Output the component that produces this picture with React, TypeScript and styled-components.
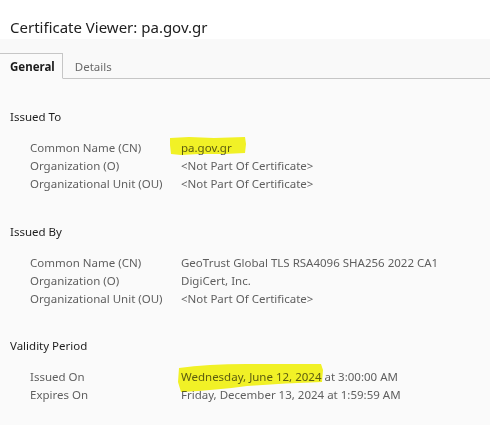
import styled, { createGlobalStyle } from "styled-components"

const GlobalStyle = createGlobalStyle`
  html, body {
    margin: 0;
    padding: 0;
    background: #fafafa;
  }
  body {
    font-family: "Noto Sans", "Open Sans", sans-serif;
    width: 490px;
    height: 425px;
    overflow: hidden;
  }
`

const Viewer = styled.div`
  display: flex;
  flex-direction: column;
  width: 490px;
  height: 425px;
  background: #fafafa;
`

const Header = styled.header`
  display: flex;
  align-items: center;
  height: 39px;
  padding: 0 10px;
  background: #ffffff;
`

const Title = styled.h1`
  margin: 0;
  padding-top: 15px;
  font-size: 15px;
  font-weight: 400;
  color: #202020;
`

const TabBar = styled.nav`
  display: flex;
  align-items: flex-end;
  height: 39px;
  background: #f9f9f9;
  border-bottom: 1px solid #c6c6c6;
`

const Tab = styled.div<{ $active?: boolean }>`
  display: flex;
  align-items: center;
  height: 24px;
  margin-bottom: -1px;
  padding: ${p => (p.$active ? "0 7px 0 10px" : "0 10px 0 12px")};
  font-size: 11.5px;
  font-weight: ${p => (p.$active ? 700 : 400)};
  color: ${p => (p.$active ? "#1b1b1b" : "#6a6a6a")};
  background: ${p => (p.$active ? "#fafafa" : "transparent")};
  border: 1px solid ${p => (p.$active ? "#c6c6c6" : "transparent")};
  border-left: none;
  border-bottom-color: ${p => (p.$active ? "#fafafa" : "transparent")};
`

const Body = styled.main`
  display: flex;
  flex-direction: column;
  padding: 29px 10px 0;
`

const Section = styled.section<{ $space?: number }>`
  display: flex;
  flex-direction: column;
  gap: 13px;
  margin-top: ${p => p.$space ?? 0}px;
`

const Heading = styled.h2`
  margin: 0;
  font-size: 11.5px;
  line-height: 18px;
  font-weight: 400;
  color: #1e1e1e;
`

const Fields = styled.dl`
  display: grid;
  grid-template-columns: 151px 1fr;
  margin: 0;
  padding-left: 20px;
  font-size: 11.5px;
  line-height: 18px;
  color: #5f5f5f;
`

const Label = styled.dt`
  margin: 0;
`

const Value = styled.dd`
  margin: 0;
  white-space: nowrap;
`

const Marked = styled.span`
  position: relative;
`

const Marker = styled.svg`
  position: absolute;
  pointer-events: none;
  mix-blend-mode: multiply;
`

type Field = { label: string; value: string; mark?: "name" | "date"; rest?: string }

const issuedTo: Field[] = [
  { label: "Common Name (CN)", value: "pa.gov.gr", mark: "name" },
  { label: "Organization (O)", value: "<Not Part Of Certificate>" },
  { label: "Organizational Unit (OU)", value: "<Not Part Of Certificate>" },
]

const issuedBy: Field[] = [
  { label: "Common Name (CN)", value: "GeoTrust Global TLS RSA4096 SHA256 2022 CA1" },
  { label: "Organization (O)", value: "DigiCert, Inc." },
  { label: "Organizational Unit (OU)", value: "<Not Part Of Certificate>" },
]

const validity: Field[] = [
  { label: "Issued On", value: "Wednesday, June 12, 2024", mark: "date", rest: " at 3:00:00 AM" },
  { label: "Expires On", value: "Friday, December 13, 2024 at 1:59:59 AM" },
]

function Highlight({ kind }: { kind: "name" | "date" }) {
  if (kind === "name") {
    return (
      <Marker width="78" height="22" viewBox="0 0 78 22" style={{ left: -12, top: -5 }}>
        <path d="M1 3 L20 2 L45 3 L76 2 L77 9 L76 18 L55 19 L30 19 L12 20 L2 19 L1 10 Z" fill="#f6f626" />
      </Marker>
    )
  }
  return (
    <Marker width="150" height="32" viewBox="0 0 150 32" style={{ left: -4, top: -7 }}>
      <path d="M2 6 Q30 2 70 2 L144 2 L146 8 L145 20 Q110 21 70 24 Q40 28 4 30 L1 20 Z" fill="#f6f626" />
    </Marker>
  )
}

function FieldList({ fields }: { fields: Field[] }) {
  return (
    <Fields>
      {fields.map(f => (
        <div key={f.label} style={{ display: "contents" }}>
          <Label>{f.label}</Label>
          <Value>
            {f.mark ? (
              <Marked>
                <Highlight kind={f.mark} />
                {f.value}
              </Marked>
            ) : (
              f.value
            )}
            {f.rest}
          </Value>
        </div>
      ))}
    </Fields>
  )
}

export default function App() {
  return (
    <>
      <GlobalStyle />
      <Viewer>
        <Header>
          <Title>Certificate Viewer: pa.gov.gr</Title>
        </Header>
        <TabBar>
          <Tab $active>General</Tab>
          <Tab>Details</Tab>
        </TabBar>
        <Body>
          <Section>
            <Heading>Issued To</Heading>
            <FieldList fields={issuedTo} />
          </Section>
          <Section $space={30}>
            <Heading>Issued By</Heading>
            <FieldList fields={issuedBy} />
          </Section>
          <Section $space={29}>
            <Heading>Validity Period</Heading>
            <FieldList fields={validity} />
          </Section>
        </Body>
      </Viewer>
    </>
  )
}
